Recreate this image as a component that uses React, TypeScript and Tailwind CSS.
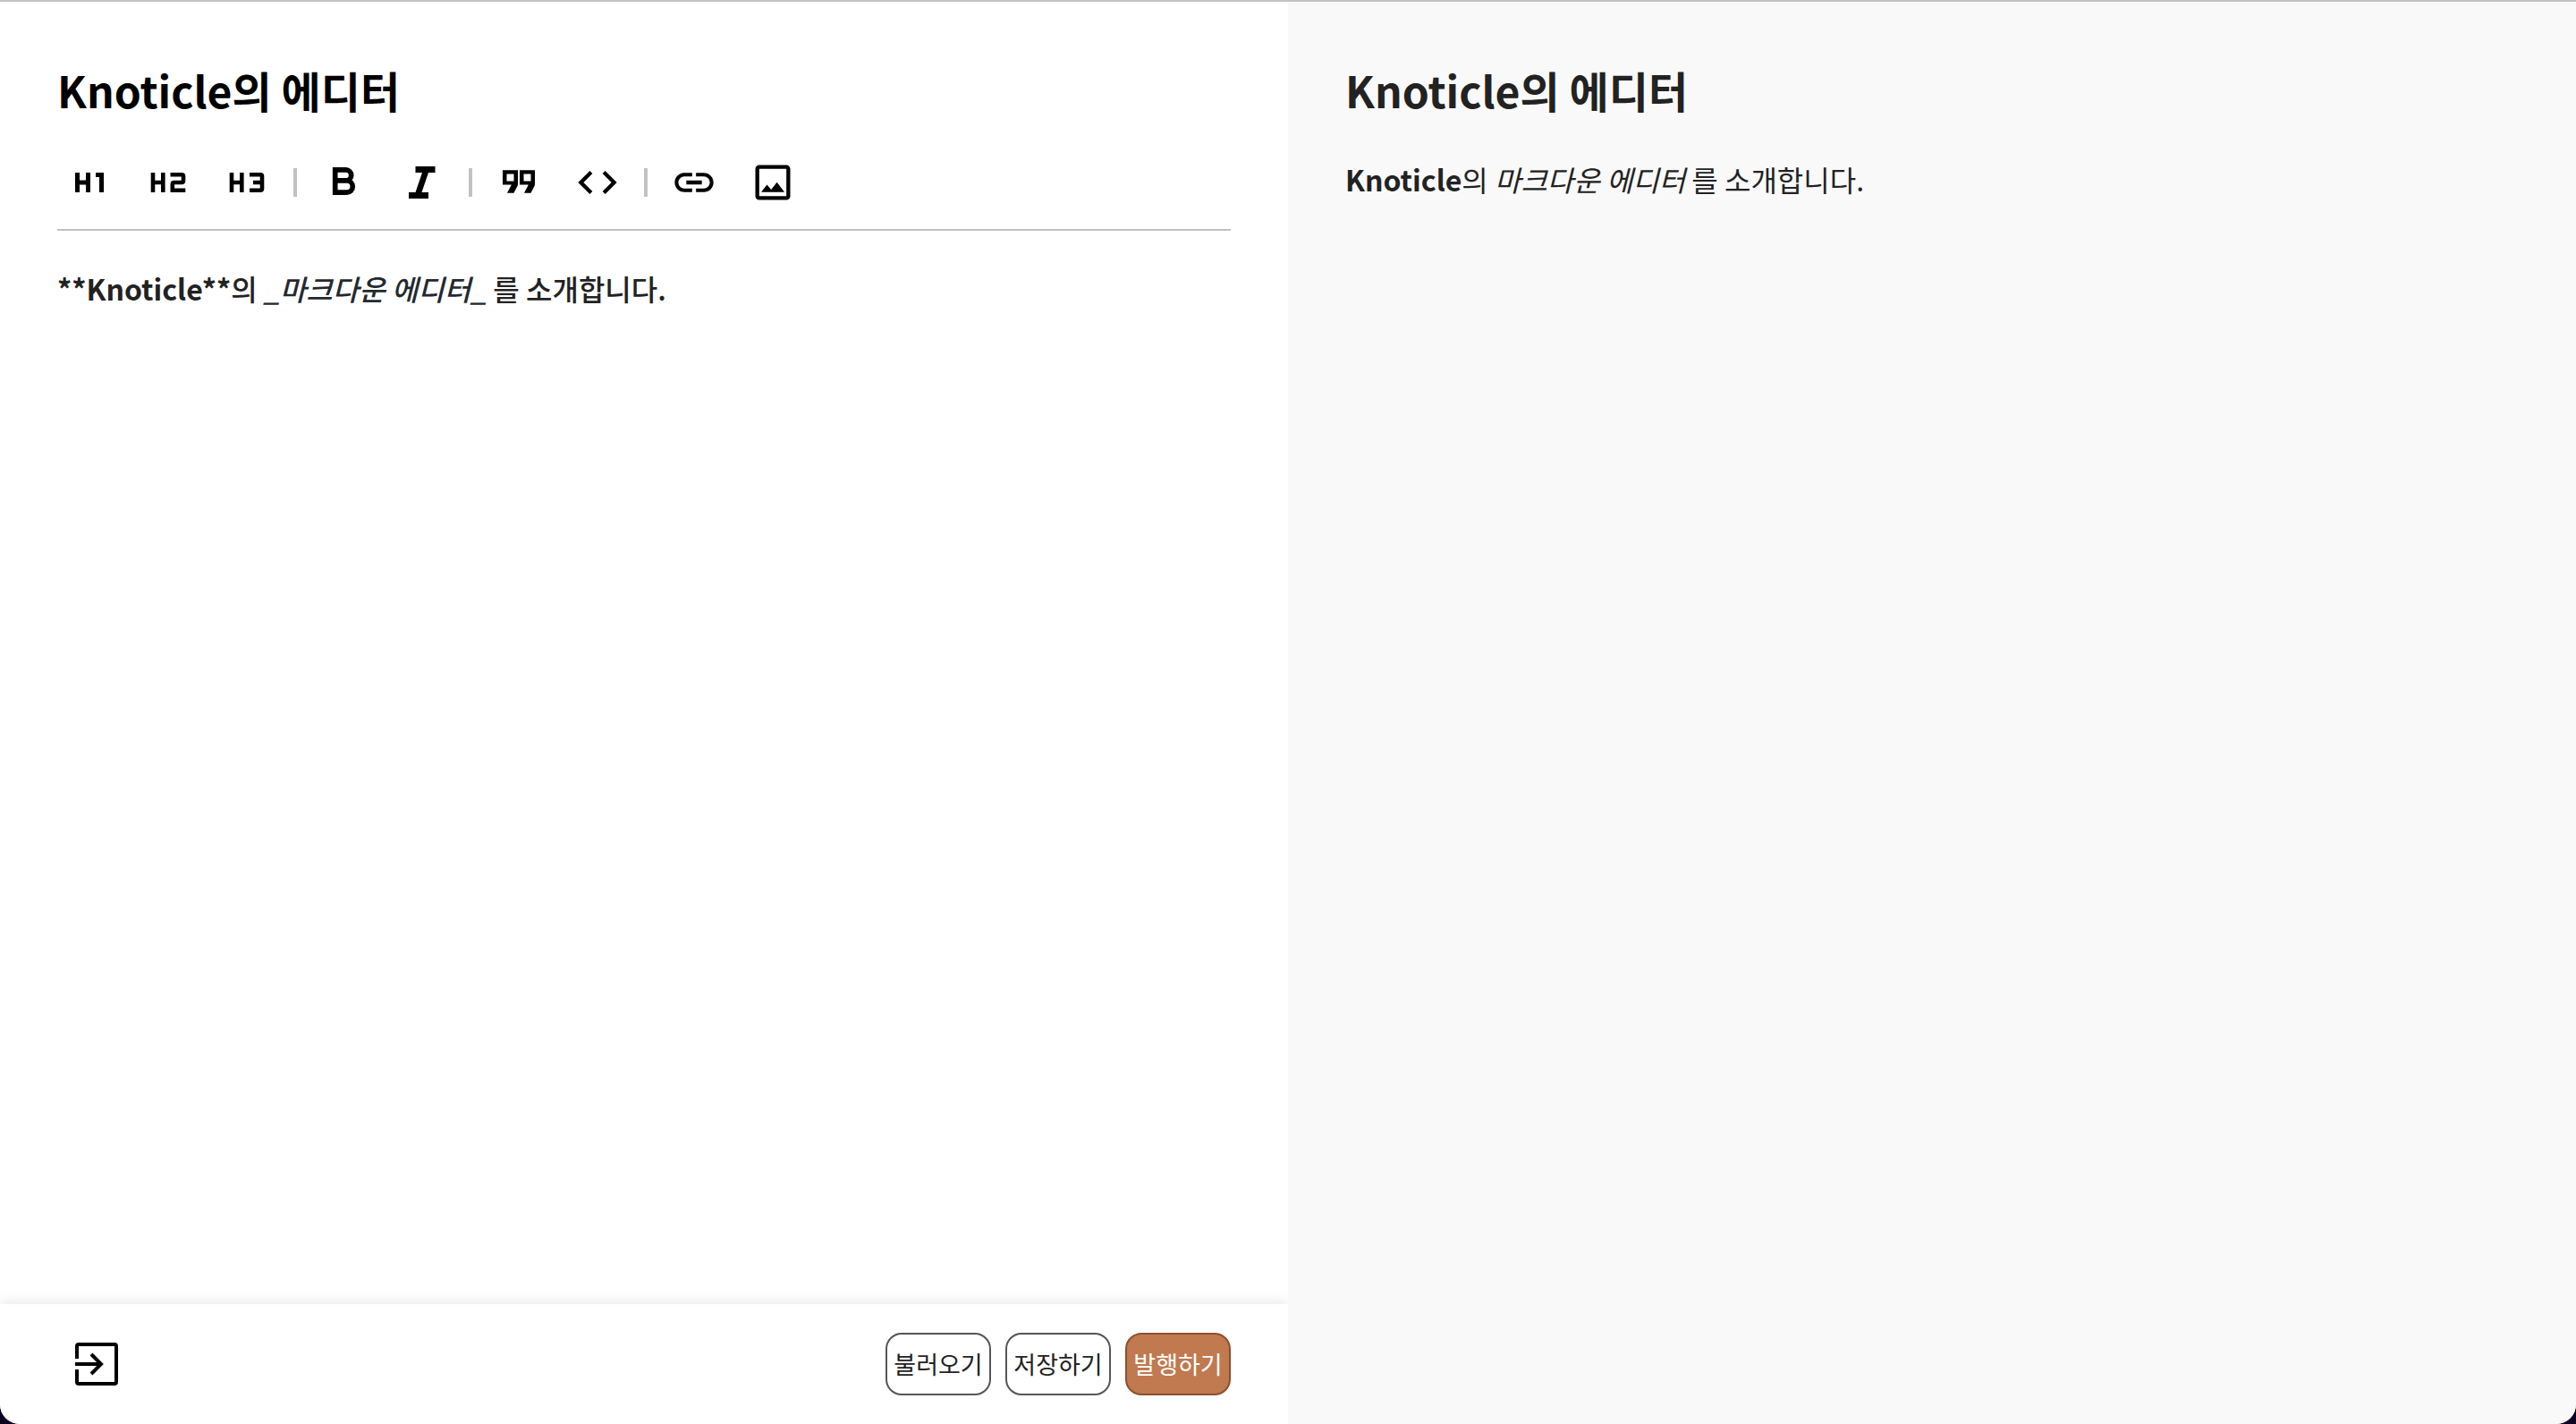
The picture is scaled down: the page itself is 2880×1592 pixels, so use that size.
import React from 'react';
import type { ReactNode } from 'react';
import { MdCode, MdLink, MdOutlineImage } from 'react-icons/md';

const iconClass = 'size-[52px]';

function Glyph({ children, weight = 5 }: { children: ReactNode; weight?: number }) {
  return (
    <svg viewBox="0 0 52 52" className={iconClass} fill="none" stroke="currentColor" strokeWidth={weight} aria-hidden="true">
      {children}
    </svg>
  );
}

const HeadingOne = () => (
  <Glyph>
    <path d="M12.5 15v22M24.5 15v22M12.5 26h12M33 17.5h6.5V37" />
  </Glyph>
);

const HeadingTwo = () => (
  <Glyph weight={4.6}>
    <path d="M9 15v22M20.3 15v22M9 26h11M28.5 17.300h12.700q1.800 0 1.800 1.800v5.100q0 1.800-1.800 1.800h-8.400q-2 0-2 2v6.700H45.300" />
  </Glyph>
);

const HeadingThree = () => (
  <Glyph weight={4.6}>
    <path d="M9 15v22M20.300 15v22M9 26h11M29 17.300h12.200q1.800 0 1.800 1.800v13.800q0 1.800-1.800 1.800H29M33 26h9" />
  </Glyph>
);

const Bold = () => (
  <Glyph weight={5.7}>
    <path d="M16.700 11.900h12a6 6 0 0 1 0 12H16.700M16.700 24h13a6.500 6.500 0 0 1 0 13.200H16.700zV9" />
  </Glyph>
);

const Italic = () => (
  <Glyph>
    <path fill="currentColor" stroke="none" d="M18.500 8h22v7H33L25.500 37H33v7H11v-7h7.500L26 15h-7.500z" />
  </Glyph>
);

const Quote = () => (
  <Glyph>
    <path fill="currentColor" stroke="none" fillRule="evenodd" d="M8 12.300h17V28q0 1-.5 2l-4 7.800H13l4.800-9.300H8zM12.500 16.500v8h8v-8zM27 12.300h17V28q0 1-.5 2l-4 7.800H32l4.800-9.300H27zM31.500 16.500v8h8v-8z" />
  </Glyph>
);

function Tool({ label, children }: { label: string; children: ReactNode }) {
  return (
    <button type="button" aria-label={label} className="flex h-14 w-[72px] items-center justify-center">
      {children}
    </button>
  );
}

const Divider = () => <span className="h-8 w-1 bg-[#c1c1c1]" />;

function Action({ children, primary = false }: { children: ReactNode; primary?: boolean }) {
  const tone = primary ? 'border-[#8b4f2e] bg-[#c1794f] text-white' : 'border-[#555555] bg-white text-[#222222]';
  return (
    <button type="button" className={`h-[70px] min-w-[118px] rounded-[18px] border-2 text-[27px] leading-10 ${tone}`}>
      {children}
    </button>
  );
}

export default function App() {
  return (
    <div className="min-h-screen bg-[#0d0221] font-['Noto_Sans_CJK_KR',sans-serif] text-[#222222]">
      <div className="grid min-h-screen grid-cols-2 overflow-hidden rounded-b-[22px] border-t-2 border-[#c1c1c1] bg-white">
        <main className="flex min-w-0 flex-col">
          <div className="flex-1 px-16 pt-[62px]">
            <input
              aria-label="제목"
              defaultValue="Knoticle의 에디터"
              className="block h-[72px] w-full text-5xl font-bold text-black outline-none"
            />
            <div className="mt-10 flex items-center gap-4 border-b-2 border-[#c1c1c1] pb-6 text-black">
              <Tool label="제목 1"><HeadingOne /></Tool>
              <Tool label="제목 2"><HeadingTwo /></Tool>
              <Tool label="제목 3"><HeadingThree /></Tool>
              <Divider />
              <Tool label="굵게"><Bold /></Tool>
              <Tool label="기울임"><Italic /></Tool>
              <Divider />
              <Tool label="인용"><Quote /></Tool>
              <Tool label="코드"><MdCode className={iconClass} /></Tool>
              <Divider />
              <Tool label="링크"><MdLink className={iconClass} /></Tool>
              <Tool label="이미지"><MdOutlineImage className={iconClass} /></Tool>
            </div>
            <div
              role="textbox"
              aria-label="본문"
              aria-multiline="true"
              contentEditable
              suppressContentEditableWarning
              className="mt-10 text-[32px] leading-[48px] font-medium outline-none"
            >
              <strong>**Knoticle**</strong>의 <em className="text-[#24292e]">_마크다운 에디터_</em> 를 소개합니다.
            </div>
          </div>
          <footer className="flex h-[134px] items-center justify-between bg-white px-16 shadow-[0_0_16px_rgba(0,0,0,0.12)]">
            <button type="button" aria-label="나가기" className="flex h-16 items-center px-3 text-black">
              <svg viewBox="0 0 64 64" className="size-16" fill="none" stroke="currentColor" strokeWidth="4" aria-hidden="true">
                <path d="M10 26V12q0-2 2-2h40q2 0 2 2v40q0 2-2 2H12q-2 0-2-2V38M8 32h29M26 21l11 11-11 11" />
              </svg>
            </button>
            <div className="flex gap-4">
              <Action>불러오기</Action>
              <Action>저장하기</Action>
              <Action primary>발행하기</Action>
            </div>
          </footer>
        </main>
        <section aria-label="미리보기" className="min-w-0 bg-[#f9f9f9] px-16 pt-[62px]">
          <h1 className="text-5xl leading-[72px] font-bold">Knoticle의 에디터</h1>
          <p className="mt-10 text-[32px] leading-[48px]">
            <strong>Knoticle</strong>의 <em>마크다운 에디터</em> 를 소개합니다.
          </p>
        </section>
      </div>
    </div>
  );
}
